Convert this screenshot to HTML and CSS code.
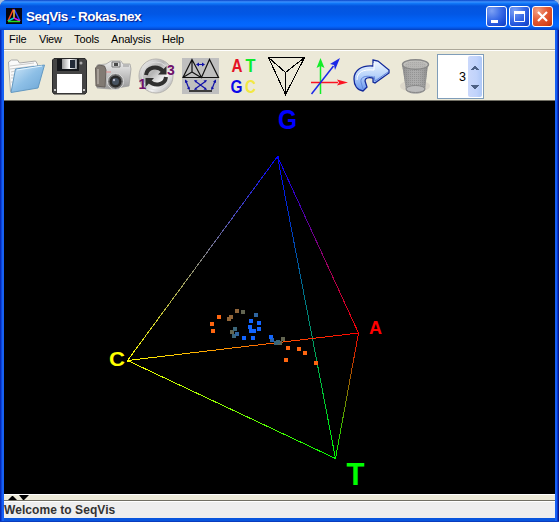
FILE: index.html
```
<!DOCTYPE html>
<html lang="en">
<head>
<meta charset="utf-8">
<title>SeqVis - Rokas.nex</title>
<link rel="stylesheet" href="styles.css">
</head>
<body>
<div class="window">
  <header class="titlebar">
    <svg class="app-icon" width="16" height="16" viewBox="0 0 16 16"><path fill="#050510" d="M0 0h16v16H0z"/><g fill="none" stroke-width="1.5"><path stroke="#f42" d="M7.5 1L2 13"/><path stroke="#24f" d="M8 1l6 12"/><path stroke="#fb4" d="M8 2v8"/><path stroke="#0cd" d="M8 10l-6 3"/><path stroke="#d1d" d="M8 10l6 3"/><path stroke="#2d2" d="M2 13.5h12"/></g></svg>
    <span class="title">SeqVis - Rokas.nex</span>
    <div class="controls">
      <button class="control" aria-label="Minimize"><svg width="19" height="19"><path d="M4 13h7v3H4z" fill="#fff"/></svg></button>
      <button class="control" aria-label="Maximize"><svg width="19" height="19"><path d="M4.5 5.5h10v9h-10zM4 6.5h11" fill="none" stroke="#fff"/><path d="M4 4h11v2H4z" fill="#fff"/></svg></button>
      <button class="control close" aria-label="Close"><svg width="19" height="19"><path d="M5 5l9 9M14 5l-9 9" stroke="#fff" stroke-width="2.2"/></svg></button>
    </div>
  </header>
  <nav class="menu"><span class="m-file">File</span><span class="m-view">View</span><span class="m-tools">Tools</span><span class="m-analysis">Analysis</span><span class="m-help">Help</span></nav>
  <div class="toolbar">
    <svg width="43" height="49" viewBox="5 51 43 49">
      <defs><linearGradient id="folder" x1="0" y1="0" x2="1" y2="1"><stop stop-color="#d4eafa"/><stop offset=".5" stop-color="#8dbfe6"/><stop offset="1" stop-color="#69a3d4"/></linearGradient></defs>
      <path d="M8.500 62l3-2 6 0 2 3 16-2 2 3v23l-27 4.500z" fill="#fafafa" stroke="#aaa"/>
      <path d="M10 66l24-3M10 69l24-3M11 72l4-1M11 75l3 0M11 78h3M11 82h2" stroke="#ccc"/>
      <path d="M15.500 69l29-4-6.500 23-27 4.500z" fill="url(#folder)" stroke="#6399c2"/>
      <path d="M17 70l25-4" stroke="#e5f5ff"/>
    </svg>
    <svg width="43" height="49" viewBox="48 51 43 49">
      <defs><linearGradient id="metal"><stop stop-color="#999"/><stop offset=".5" stop-color="#fff"/><stop offset="1" stop-color="#8a8f96"/></linearGradient></defs>
      <path d="M54 58.500h31l1.500 2v32l-1.500 1.500H54l-1.500-2V60z" fill="#444" stroke="#292929"/>
      <path d="M57 59h22v12H57z" fill="#15171b"/><path d="M62 59h15v10H62z" fill="url(#metal)"/><path d="M70 60h5v8h-5z" fill="#222a37"/>
      <path d="M57 74h25v19H57z" fill="#fff"/><circle cx="81" cy="63" r="1.500" fill="#aaa"/><path d="M54 89h2v2h-2zM83 89h2v2h-2z" fill="#ccc"/>
    </svg>
    <svg width="43" height="49" viewBox="91 51 43 49">
      <defs><linearGradient id="body" x1="0" y1="0" x2="0" y2="1"><stop stop-color="#eee"/><stop offset="1" stop-color="#999"/></linearGradient></defs>
      <path d="M97 65l9-1 5-3h10l2 3 7 0 1 5-2 17-18 3-14-1z" fill="url(#body)" stroke="#999" stroke-width=".7"/>
      <path d="M95.500 68l3-3 6 1 1.500 4-1 17-9-1z" fill="#817a73" stroke="#67615c"/>
      <path d="M98 69v15" stroke="#a7a099" stroke-width="2"/>
      <path d="M112 62h8v5h-8z" fill="#ddd" stroke="#777"/><path d="M114 63h4v3h-4z" fill="#484848"/><path d="M123 64h6v3h-6z" fill="#b9b9b9"/>
      <path d="M106 72h5" stroke="#d88"/><circle cx="115.500" cy="81.500" r="8" fill="#777" stroke="#ddd"/><circle cx="115.500" cy="81.500" r="6" fill="#292929"/><circle cx="115.500" cy="81.500" r="3.500" fill="#465260"/><circle cx="114" cy="80" r="1.200" fill="#bbc"/>
    </svg>
    <svg width="44" height="49" viewBox="134 51 44 49">
      <defs><linearGradient id="disc" x1="0" y1="0" x2="1" y2="1"><stop stop-color="#fff"/><stop offset=".4" stop-color="#b4b4b4"/><stop offset=".65" stop-color="#f2f2f2"/><stop offset="1" stop-color="#999"/></linearGradient></defs>
      <circle cx="156" cy="76" r="17" fill="url(#disc)" stroke="#b5b3af"/><circle cx="156" cy="76" r="14" fill="none" stroke="#dedede"/>
      <g fill="none" stroke="#303030" stroke-width="4"><path d="M146 75c1-8 11-10 17-4"/><path d="M166 77c-1 8-11 10-17 4"/></g><path d="M158 74.500h8.500V66zM154 78h-8.500v9z" fill="#303030"/>
      <text x="138.500" y="89" font-size="14" class="icon-letter" fill="#70106b">1</text><text x="167" y="75" font-size="14" class="icon-letter" fill="#70106b">3</text>
    </svg>
    <svg width="43" height="49" viewBox="178 51 43 49">
      <path d="M182 58h37v36h-37z" fill="#bfbfbf"/>
      <g fill="none" stroke="#111" stroke-width="1.200"><path d="M192 59.500l-9 18h35.500l-9-18-8 18zM192 59.500v12.500l-9 5.500M192 72l9 5.500"/><path d="M189 91h23" stroke-width="1.500"/></g>
      <g fill="none" stroke="#1111a8" stroke-width="1.200"><path d="M197 64.500h7M186 81l3 8M215 81l-3 8M195 81l11 8M206 81l-11 8"/></g>
      <path fill="#1111a8" d="M196 64.500l3-2v4zM205 64.500l-3-2v4zM185 79.500l3 2-3 1.500zM190 90l-3-1.500 2.500-2zM216 79.500l-3 2 3 1.500zM211 90l3-1.500-2.500-2zM194 80l3.500.5-2 2zM207 80l-3.500.5 2 2zM194 90l3.500-.5-2-2zM207 90l-3.500-.5 2-2z"/>
    </svg>
    <svg width="43" height="49" viewBox="221 51 43 49" class="icon-letter" font-size="18.500">
      <text x="231.500" y="72" textLength="11" lengthAdjust="spacingAndGlyphs" fill="#e41325">A</text><text x="245.500" y="72" textLength="10" lengthAdjust="spacingAndGlyphs" fill="#0deb2c">T</text><text x="230.500" y="93" textLength="12" lengthAdjust="spacingAndGlyphs" fill="#0b09e8">G</text><text x="245" y="93" textLength="11" lengthAdjust="spacingAndGlyphs" fill="#f2e843">C</text>
    </svg>
    <svg width="43" height="49" viewBox="264 51 43 49" fill="none" stroke="#000" stroke-width="1.100" shape-rendering="crispEdges"><path d="M268.500 57.500h36l-19 37zM268.500 57.500l17 15 19-15M285.500 72.500v22"/></svg>
    <svg width="43" height="49" viewBox="307 51 43 49">
      <path d="M320.500 94V66" stroke="#13ed28" stroke-width="1.500"/><path fill="#13ed28" d="M320.500 58l-4 10 4-2 4 2z"/>
      <path d="M311 82.500h27" stroke="#fb1423" stroke-width="1.500"/><path fill="#fb1423" d="M348 82.500l-11-3 2 3-2 3z"/>
      <path d="M311.500 94l22-28" stroke="#1c28e7" stroke-width="1.500"/><path fill="#1c28e7" d="M340 58l-10 6 4 1 1 5z"/>
    </svg>
    <svg width="44" height="49" viewBox="350 51 44 49">
      <defs><linearGradient id="arrow" x1="0" y1="0" x2="0" y2="1"><stop stop-color="#f3f9ff"/><stop offset=".5" stop-color="#b8d3fa"/><stop offset="1" stop-color="#6794ee"/></linearGradient></defs>
      <path d="M373 60l5 1 11 9v3l-14 10-2-1v-4c-5-1-8 0-8 3l2 6-4 4c-6-1-9-6-9-12 0-9 8-14 19-13z" fill="url(#arrow)" stroke="#12299a" stroke-width="1.300"/>
      <path d="M357 80c0-8 6-11 17-10v-7" fill="none" stroke="#fff"/><path d="M374 76l1 5 13-9M373 77c-7-2-13 0-12 5l2 7" fill="none" stroke="#6489dc"/>
    </svg>
    <svg width="43" height="49" viewBox="394 51 43 49">
      <defs><pattern id="mesh" width="2" height="2" patternUnits="userSpaceOnUse"><path d="M0 0h2v2H0z" fill="#aaa"/><path d="M0 0h1v1H0z" fill="#8d8d8d"/></pattern><linearGradient id="bin"><stop stop-color="#777"/><stop offset=".5" stop-color="#bbb" stop-opacity=".2"/><stop offset="1" stop-color="#777"/></linearGradient></defs>
      <ellipse cx="415" cy="86" rx="15" ry="6" fill="#ddd8cb"/><path d="M402 64l4 26c3 5 16 5 19 0l3-26z" fill="url(#mesh)"/><path d="M402 64l4 26c3 5 16 5 19 0l3-26z" fill="url(#bin)" opacity=".65"/>
      <ellipse cx="415.500" cy="64.500" rx="13" ry="4.800" fill="#c3c2be" stroke="#888" stroke-width="1.400"/><ellipse cx="415.500" cy="65" rx="11" ry="3.500" fill="url(#mesh)" opacity=".45"/><ellipse cx="415.500" cy="89" rx="9.500" ry="3.500" fill="#bbb" stroke="#888"/>
    </svg>
    <div class="spinner"><span class="value">3</span><svg class="steps" width="14" height="41" viewBox="0 0 14 41" fill="#4d6185"><path d="M6 10h2v1h1v1h1v1h1v1H8v-1H6v1H3v-1h1v-1h1v-1h1zM3 29h8v1h-1v1H9v1H8v1H6v-1H5v-1H4v-1H3z"/></svg></div>
  </div>
  <svg class="plot" width="551" height="393" viewBox="4 101 551 393">
    <defs>
      <linearGradient id="gc" gradientUnits="userSpaceOnUse" x1="278" y1="157" x2="128" y2="360"><stop stop-color="#00f"/><stop offset="1" stop-color="#ff0"/></linearGradient>
      <linearGradient id="ga" gradientUnits="userSpaceOnUse" x1="278" y1="157" x2="358" y2="333"><stop stop-color="#00f"/><stop offset="1" stop-color="#f00"/></linearGradient>
      <linearGradient id="gt" gradientUnits="userSpaceOnUse" x1="278" y1="157" x2="335" y2="458"><stop stop-color="#00f"/><stop offset="1" stop-color="#0f0"/></linearGradient>
      <linearGradient id="ca" gradientUnits="userSpaceOnUse" x1="128" y1="360" x2="358" y2="333"><stop stop-color="#ff0"/><stop offset="1" stop-color="#f00"/></linearGradient>
      <linearGradient id="ct" gradientUnits="userSpaceOnUse" x1="128" y1="360" x2="335" y2="458"><stop stop-color="#ff0"/><stop offset="1" stop-color="#0f0"/></linearGradient>
      <linearGradient id="at" gradientUnits="userSpaceOnUse" x1="358" y1="333" x2="335" y2="458"><stop stop-color="#f00"/><stop offset="1" stop-color="#0f0"/></linearGradient>
    </defs>
    <g fill="none" shape-rendering="crispEdges"><path stroke="url(#gc)" d="M277.500 156.500L127.500 360.500"/><path stroke="url(#ga)" d="M277.500 156.500L358.500 333"/><path stroke="url(#gt)" d="M277.500 156.500L335.500 458.500"/><path stroke="url(#ca)" d="M127.500 360.500L358.500 333"/><path stroke="url(#ct)" d="M127.500 360.500L335.500 458.500"/><path stroke="url(#at)" d="M358.500 333L335.500 458.500"/></g>
    <path fill="#00f" d="M277 156h2v2h-2z"/><path fill="#ff0" d="M127 360h2v2h-2z"/><path fill="#f00" d="M358 332h1v3h-1z"/><path fill="#0f0" d="M334 457h2v2h-2z"/>
    <g shape-rendering="crispEdges">
      <path fill="#ff6610" d="M210 322h4v4h-4zM217 315h4v4h-4zM211 329h4v4h-4zM286 346h4v4h-4zM297 347h4v4h-4zM303 351h4v4h-4zM284 358h4v4h-4zM314 361h4v4h-4z"/>
      <path fill="#92663a" d="M227 317h4v4h-4zM229 315h4v4h-4zM235 309h4v4h-4z"/>
      <path fill="#626551" d="M241 310h4v4h-4zM230 330h4v4h-4zM281 337h4v4h-4zM278 341h4v4h-4z"/>
      <path fill="#3b6679" d="M233 327h4v4h-4zM232 334h4v4h-4zM274 341h4v4h-4zM276 340h4v4h-4z"/>
      <path fill="#2e65a0" d="M254 313h4v4h-4zM235 332h4v4h-4zM270 338h4v4h-4z"/>
      <path fill="#1265ff" d="M249 319h4v4h-4zM257 321h4v4h-4zM248 325h4v4h-4zM249 329h7v4h-7zM257 327h4v4h-4zM242 336h4v4h-4zM251 336h4v4h-4zM269 335h4v4h-4z"/>
      <path fill="#2264bd" d="M272 338h2v4h-2z"/>
    </g>
    <g class="vertex"><text x="278" y="128.500" font-size="27" textLength="19" lengthAdjust="spacingAndGlyphs" fill="#00f">G</text><text x="109" y="365.500" font-size="21" textLength="16" lengthAdjust="spacingAndGlyphs" fill="#ff0">C</text><text x="369" y="334" font-size="18.500" textLength="13" lengthAdjust="spacingAndGlyphs" fill="#f00">A</text><text x="346.500" y="485" font-size="31" textLength="18" lengthAdjust="spacingAndGlyphs" fill="#0f0">T</text></g>
  </svg>
  <div class="divider"><svg width="26" height="5"><path d="M4 5l4-4h1l4 4zM15 0h10l-5 5h-1z"/></svg></div>
  <footer class="status">Welcome to SeqVis</footer>
</div>
</body>
</html>
```
FILE: styles.css
```
* { box-sizing: border-box; }
body { margin: 0; background: #a9bfdc; overflow: hidden; }
svg { display: block; flex: none; }
.window {
  display: flex; flex-direction: column; width: 559px; height: 522px;
  padding: 0 4px 4px; border-radius: 7px 7px 0 0;
  background: linear-gradient(#0b3dbe, #0b3dbe) 0 100% / 100% 1px no-repeat, linear-gradient(90deg, #0629b8 0 1px, #0b45d9 1px 2px, #1660f4 2px 4px, #0855dd 4px 555px, #1660f4 555px 557px, #0a39c9 557px 558px, #03188e 558px);
}
.titlebar {
  display: flex; flex: none; align-items: center; height: 30px; margin: 0 -4px; padding: 2px 6px 0;
  border-radius: 7px 7px 0 0;
  background: linear-gradient(#0a45c9 0, #3f93ff 2px, #137dfb 3px, #0455df 6px, #0257e5 14px, #0265fb 22px, #0467ff 26px, #0557e4 28px, #033fc0 30px);
}
.app-icon { margin: 0 4px 0 0; }
.title {
  flex: 1; font: bold 13.500px/18px "Liberation Sans", sans-serif; letter-spacing: -.52px;
  color: #fff; text-shadow: 1px 1px 1px #0a1883; padding-top: 1px; white-space: nowrap;
}
.controls { display: flex; gap: 2px; }
.control {
  width: 21px; height: 21px; padding: 0; border: 1px solid #fff; border-radius: 3px;
  background: radial-gradient(circle at 25% 20%, #7da1f4 0, #3b6ce7 45%, #1c4fd8 75%, #1440bc 100%);
}
.close { background: radial-gradient(circle at 25% 20%, #f1a184 0, #e35b35 45%, #d5421a 80%, #ad2e0b 100%); }
.menu {
  display: flex; flex: none; height: 20px; padding-left: 5px;
  border-bottom: 1px solid #aca899; background: #ece9d8;
  font: 11px/18px "Liberation Sans", sans-serif; color: #000;
}
.m-file { width: 30px; }
.m-view { width: 35px; letter-spacing: -.25px; }
.m-tools { width: 37px; letter-spacing: -.1px; }
.m-analysis { width: 51px; letter-spacing: -.15px; }
.m-help { letter-spacing: -.2px; }
.toolbar {
  display: flex; flex: none; height: 51px; padding-left: 1px;
  border-top: 1px solid #fff; border-bottom: 1px solid #716f64; background: #ece9d8;
}
.icon-letter { font-family: "Liberation Sans", sans-serif; font-weight: bold; }
.spinner {
  display: flex; width: 47px; height: 45px; margin-top: 3px; padding: 1px;
  border: 1px solid #7f9db9; background: #fff;
}
.value { flex: 1; padding-right: 2px; text-align: right; font: 12.500px/43px "Liberation Sans", sans-serif; }
.steps { border-radius: 2px; background: linear-gradient(90deg, #cbd9fc, #c1d3fb 60%, #aec8f7); }
.plot { background: #000; }
.divider { height: 7px; flex: none; border-top: 1px solid #fff; border-bottom: 1px solid #716f64; background: #ece9d8; }
.status {
  flex: none; height: 17px; border-top: 1px solid #fff; background: #eee;
  font: bold 12px/16px "Liberation Sans", sans-serif; letter-spacing: .06px; color: #333;
}
.vertex { font-family: "Liberation Sans", sans-serif; font-weight: bold; }
```
